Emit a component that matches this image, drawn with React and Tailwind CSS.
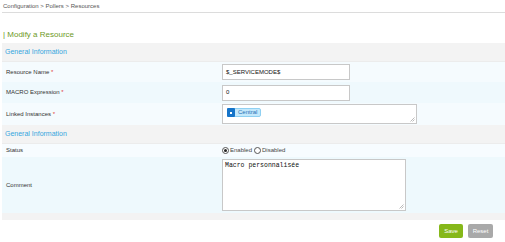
import React from "react";

const Label = ({ text, required }) => (
  <span>
    {text}
    {required && <span className="text-[#e23b3b]"> *</span>}
  </span>
);

const Grip = () => (
  <svg className="absolute right-[1px] bottom-[1px]" width="5" height="5" viewBox="0 0 5 5">
    <path d="M4.5 0.5 L0.5 4.5 M4.5 2.5 L2.5 4.5" stroke="#aaa" strokeWidth="0.8" />
  </svg>
);

const App = () => {
  return (
    <div className="w-[505px] h-[242px] bg-white font-['Liberation_Sans',Arial,sans-serif] text-[6px] text-[#333] overflow-hidden">
      {/* breadcrumb */}
      <div className="h-[12px] pl-[3px] flex items-center text-[#555]">
        Configuration &gt; Pollers &gt; Resources
      </div>
      <div className="ml-[2px] h-[1px] bg-[#dcdcdc]" />

      <div className="h-[30px] flex items-end pl-[3px] pb-[2px] text-[8px] text-[#6e9a1e]">
        | Modify a Resource
      </div>

      <div className="ml-[2px]">
        {/* section header */}
        <div className="h-[19px] bg-[#f3f3f3] flex items-center pl-[3px] text-[7px] text-[#36a6de] border-b border-[#ececec]">
          General Information
        </div>
        <div className="h-[20px] bg-[#f5fbfe] flex items-center">
          <div className="w-[220px] pl-[4px]">
            <Label text="Resource Name" required />
          </div>
          <div className="w-[128px] h-[16px] bg-white border border-[#c8c8c8] flex items-center pl-[3px] text-[#111]">
            $_SERVICEMODE$
          </div>
        </div>
        <div className="h-[21px] bg-[#eff9fd] flex items-center">
          <div className="w-[220px] pl-[4px]">
            <Label text="MACRO Expression" required />
          </div>
          <div className="w-[128px] h-[16px] bg-white border border-[#c8c8c8] flex items-center pl-[3px] text-[#111]">
            0
          </div>
        </div>
        <div className="h-[22px] bg-[#f5fbfe] flex items-center">
          <div className="w-[220px] pl-[4px]">
            <Label text="Linked Instances" required />
          </div>
          <div className="relative w-[195px] h-[20px] bg-white border border-[#c8c8c8] flex items-start pt-[3px] pl-[4px]">
            <div className="flex items-center h-[9px] rounded-[2px] bg-[#c3e8fb] border border-[#8fd0f2]">
              <div className="w-[8px] h-[9px] -ml-[1px] bg-[#1574c9] rounded-[1px] flex items-center justify-center">
                <div className="w-[2px] h-[2px] bg-white" />
              </div>
              <span className="px-[3px] text-[#2a72b5]">Central</span>
            </div>
            <Grip />
          </div>
        </div>

        <div className="h-[19px] bg-[#f3f3f3] flex items-center pl-[3px] text-[7px] text-[#36a6de] border-b border-[#ececec]">
          General Information
        </div>
        <div className="h-[13px] bg-[#f7fcff] flex items-center">
          <div className="w-[220px] pl-[4px]">Status</div>
          <div className="flex items-center gap-[1px] text-[#444]">
            <span className="w-[7px] h-[7px] rounded-full border border-[#555] bg-white flex items-center justify-center">
              <span className="w-[3px] h-[3px] rounded-full bg-[#222]" />
            </span>
            <span>Enabled</span>
            <span className="w-[7px] h-[7px] rounded-full border border-[#555] bg-white ml-[1px]" />
            <span>Disabled</span>
          </div>
        </div>
        <div className="h-[56px] bg-[#eef9fd] flex items-center">
          <div className="w-[220px] pl-[4px]">Comment</div>
          <div className="relative w-[184px] h-[52px] bg-white border border-[#c8c8c8] pl-[2px] pt-[1px] font-['Liberation_Mono','Courier_New',monospace] text-[6.5px] text-[#111]">
            Macro personnalisée
            <Grip />
          </div>
        </div>
        <div className="h-[7px] bg-[#f3f3f3]" />
      </div>

      <div className="flex justify-end gap-[5px] pr-[12px] pt-[4px]">
        <button className="w-[24px] h-[14px] rounded-[2px] bg-[#86b81a] text-white text-[6px]">
          Save
        </button>
        <button className="w-[25px] h-[14px] rounded-[2px] bg-[#a9a9a9] text-white text-[6px]">
          Reset
        </button>
      </div>
    </div>
  );
};

export default App;
